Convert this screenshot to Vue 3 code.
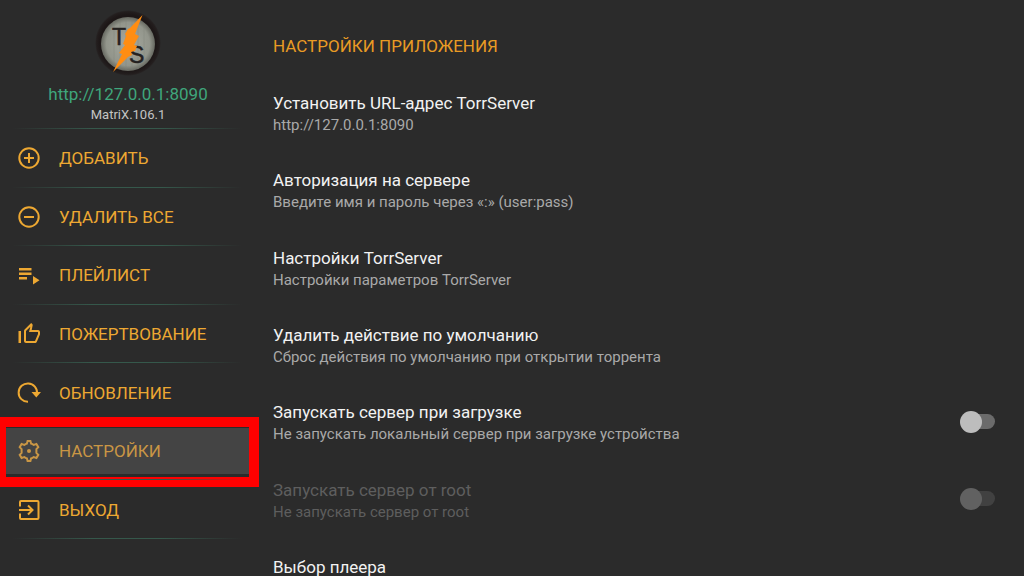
<script setup>
import { ref } from 'vue'

const menu = [
  { id: 'add', label: 'ДОБАВИТЬ' },
  { id: 'clear', label: 'УДАЛИТЬ ВСЕ' },
  { id: 'playlist', label: 'ПЛЕЙЛИСТ' },
  { id: 'donate', label: 'ПОЖЕРТВОВАНИЕ' },
  { id: 'update', label: 'ОБНОВЛЕНИЕ' },
  { id: 'settings', label: 'НАСТРОЙКИ' },
  { id: 'exit', label: 'ВЫХОД' },
]
const active = ref('settings')

const settings = ref([
  { id: 'url', title: 'Установить URL-адрес TorrServer', note: 'http://127.0.0.1:8090' },
  { id: 'auth', title: 'Авторизация на сервере', note: 'Введите имя и пароль через «:» (user:pass)' },
  { id: 'params', title: 'Настройки TorrServer', note: 'Настройки параметров TorrServer' },
  { id: 'reset', title: 'Удалить действие по умолчанию', note: 'Сброс действия по умолчанию при открытии торрента' },
  { id: 'boot', title: 'Запускать сервер при загрузке', note: 'Не запускать локальный сервер при загрузке устройства', toggle: true, on: false },
  { id: 'root', title: 'Запускать сервер от root', note: 'Не запускать сервер от root', toggle: true, on: false, disabled: true },
  { id: 'player', title: 'Выбор плеера', note: '' },
])
</script>

<template>
  <div class="app">
    <aside class="sidebar">
      <header class="brand">
        <svg class="logo" viewBox="0 0 68 68" aria-hidden="true">
          <defs>
            <radialGradient id="face">
              <stop offset="0" stop-color="#a6a99f" />
              <stop offset="0.8" stop-color="#92958b" />
              <stop offset="1" stop-color="#666860" />
            </radialGradient>
            <radialGradient id="rim">
              <stop offset="0.85" stop-color="#1d1717" />
              <stop offset="0.95" stop-color="#231e1e" />
              <stop offset="1" stop-color="#2b2b2b" />
            </radialGradient>
          </defs>
          <circle cx="34" cy="34" r="33" fill="url(#rim)" />
          <circle cx="34" cy="35" r="27" fill="url(#face)" />
          <path d="M20 12v46M26 10v50M32 9v52M38 9v52M44 10v50M50 14v42" stroke="#7f8279" stroke-width="1" opacity=".35" />
          <text x="18" y="36" class="logo-letter">T</text>
          <text x="35" y="54" class="logo-letter">S</text>
          <path d="M48.500 6 36 19l-2 1-3 5 1 2-3 8 2 1-6 8 3 1-2 4-7 14 15-15 4-2-1-3 4-1 2-5-3-1 5-9-4-2z" fill="#ff8d12" />
        </svg>
        <a class="host" href="#host">http://127.0.0.1:8090</a>
        <span class="version">MatriX.106.1</span>
      </header>
      <nav>
        <ul class="menu">
          <li v-for="item in menu" :key="item.id" class="menu-row">
            <button type="button" class="menu-button" :class="{ active: item.id === active }" @click="active = item.id">
              <svg class="icon" viewBox="0 0 24 24" aria-hidden="true">
                <g v-if="item.id === 'add'" class="line">
                  <circle cx="12" cy="12" r="9.700" /><path d="M12 7v10M7 12h10" />
                </g>
                <g v-else-if="item.id === 'clear'" class="line">
                  <circle cx="12" cy="12" r="9.700" /><path d="M7 12h10" />
                </g>
                <g v-else-if="item.id === 'playlist'">
                  <path d="M2 5h12.500v2.500H2zM2 9.500h12.500V12H2zM2 14h8v2.500H2zM16 13v8.500l6.500-4.200z" />
                </g>
                <path v-else-if="item.id === 'donate'" d="M9 21h9c.83 0 1.540-.5 1.840-1.220l3.020-7.050c.09-.23.14-.47.14-.73v-2c0-1.100-.9-2-2-2h-6.310l.95-4.570.03-.32c0-.41-.17-.79-.44-1.060L14.170 1 7.580 7.590C7.220 7.950 7 8.450 7 9v10c0 1.100.9 2 2 2zM9 9l4.340-4.340L12 10h9v2l-3 7H9V9zM1.500 9H4v12H1.500z" />
                <g v-else-if="item.id === 'update'" class="line">
                  <path d="M11 20.800A9.200 9.200 0 1 1 20 12.500" /><path d="M14.500 11h9.500l-4.700 5.500z" class="solid" />
                </g>
                <g v-else-if="item.id === 'settings'" class="line">
                  <path d="M9.900 4.600 10.600 2h2.800l.7 2.600q1.500.4 2.600 1.300l2.700-.9 1.900 3.200-1.900 1.900v3.800l1.900 1.900-1.900 3.200-2.700-.9q-1.100.9-2.600 1.300l-.7 2.600h-2.800l-.7-2.600q-1.500-.4-2.600-1.300l-2.700.9-1.900-3.200 1.900-1.900v-3.800L2.700 8.200 4.600 5l2.700.9q1.100-.9 2.600-1.300z" />
                  <circle cx="12" cy="12" r="2" class="dot" />
                </g>
                <g v-else class="line">
                  <path d="M3 8.500V4q0-1 1-1h16.500q1 0 1 1v16q0 1-1 1H4q-1 0-1-1v-4.500M2 12h13.500M11 7.500l4.500 4.500-4.500 4.500" />
                </g>
              </svg>
              <span>{{ item.label }}</span>
            </button>
            <span v-if="item.id === 'settings'" class="marker" aria-hidden="true"></span>
          </li>
        </ul>
      </nav>
    </aside>

    <main class="content">
      <h1 class="heading">НАСТРОЙКИ ПРИЛОЖЕНИЯ</h1>
      <ul class="settings">
        <li v-for="s in settings" :key="s.id" class="setting" :class="{ disabled: s.disabled }">
          <component :is="s.toggle ? 'label' : 'button'" class="setting-body" :for="s.toggle ? s.id : undefined" :type="s.toggle ? undefined : 'button'">
            <span class="title">{{ s.title }}</span>
            <span v-if="s.note" class="note">{{ s.note }}</span>
          </component>
          <input v-if="s.toggle" :id="s.id" v-model="s.on" class="switch" type="checkbox" role="switch" :disabled="s.disabled" />
        </li>
      </ul>
    </main>
  </div>
</template>

<style>
body {
  background: #2b2b2b;
}
</style>

<style scoped>
.app {
  display: grid;
  grid-template-columns: 260px 1fr;
  height: 100vh;
  overflow: hidden;
  background: #2b2b2b;
  color: #f2f2f2;
  font-family: Roboto, "Noto Sans", sans-serif;
}
ul {
  margin: 0;
  padding: 0;
  list-style: none;
}
button {
  border: 0;
  background: none;
  color: inherit;
  font: inherit;
  text-align: left;
  cursor: pointer;
}
.brand {
  display: flex;
  flex-direction: column;
  align-items: center;
  padding: 9px 4px 4px 0;
  position: relative;
}
.brand::after,
.menu-row::after {
  content: "";
  position: absolute;
  left: 12px;
  right: 18px;
  bottom: 0;
  height: 1px;
  background: linear-gradient(90deg, transparent, #35584b 35%, #35584b 65%, transparent);
}
.logo {
  width: 68px;
  height: 68px;
}
.logo-letter {
  font: 23px "Liberation Sans", Arial, sans-serif;
  fill: #24211f;
  stroke: #24211f;
  stroke-width: 0.5px;
}
.host {
  margin-top: 6px;
  color: #3fa67c;
  font-size: 17px;
  line-height: 22px;
  text-decoration: none;
}
.version {
  color: #c4c4c4;
  font-size: 13px;
  line-height: 20px;
}
.menu {
  display: grid;
  grid-auto-rows: 1fr;
  min-height: 410px;
}
.menu-row {
  position: relative;
  display: flex;
  padding: 6px 10px 6px 6px;
}
.menu-button {
  flex: 1;
  display: flex;
  align-items: center;
  gap: 18px;
  padding: 0 11px;
  color: #eda832;
  font-size: 17px;
  line-height: 22px;
}
.menu-button.active {
  background: #444;
  color: #c99645;
}
.icon {
  width: 24px;
  height: 24px;
  fill: currentColor;
}
.line {
  fill: none;
  stroke: currentColor;
  stroke-width: 2;
}
.solid {
  fill: currentColor;
  stroke: none;
}
.dot {
  fill: currentColor;
  stroke: none;
}
.marker {
  position: absolute;
  inset: -5px 1px -7px -4px;
  border: 10px solid #f00;
  pointer-events: none;
}
.content {
  padding: 35px 28px 0 13px;
}
.heading {
  margin: 0;
  color: #e99b24;
  font-size: 17px;
  font-weight: 400;
  line-height: 22px;
}
.settings {
  display: grid;
  grid-auto-rows: 1fr;
  min-height: 541px;
  margin-top: 19px;
}
.setting {
  display: flex;
  align-items: center;
  justify-content: space-between;
}
.setting-body {
  display: flex;
  flex-direction: column;
  flex: 1;
  min-height: 45px;
  padding: 0;
}
.title {
  font-size: 17px;
  line-height: 22px;
}
.note {
  color: #a9a9a9;
  font-size: 15px;
  line-height: 23px;
}
.disabled .title,
.disabled .note {
  color: #5e5e5e;
}
.switch {
  appearance: none;
  position: relative;
  width: 36px;
  height: 22px;
  margin: 0 0 4px;
}
.switch::before {
  content: "";
  position: absolute;
  inset: 3px 1px 4px 6px;
  border-radius: 8px;
  background: #6b6b6b;
}
.switch::after {
  content: "";
  position: absolute;
  top: 0;
  left: 0;
  width: 22px;
  height: 22px;
  border-radius: 50%;
  background: #bdbdbd;
}
.switch:checked::after {
  left: 14px;
}
.switch:disabled::before {
  background: #414141;
}
.switch:disabled::after {
  background: #616161;
}
</style>
